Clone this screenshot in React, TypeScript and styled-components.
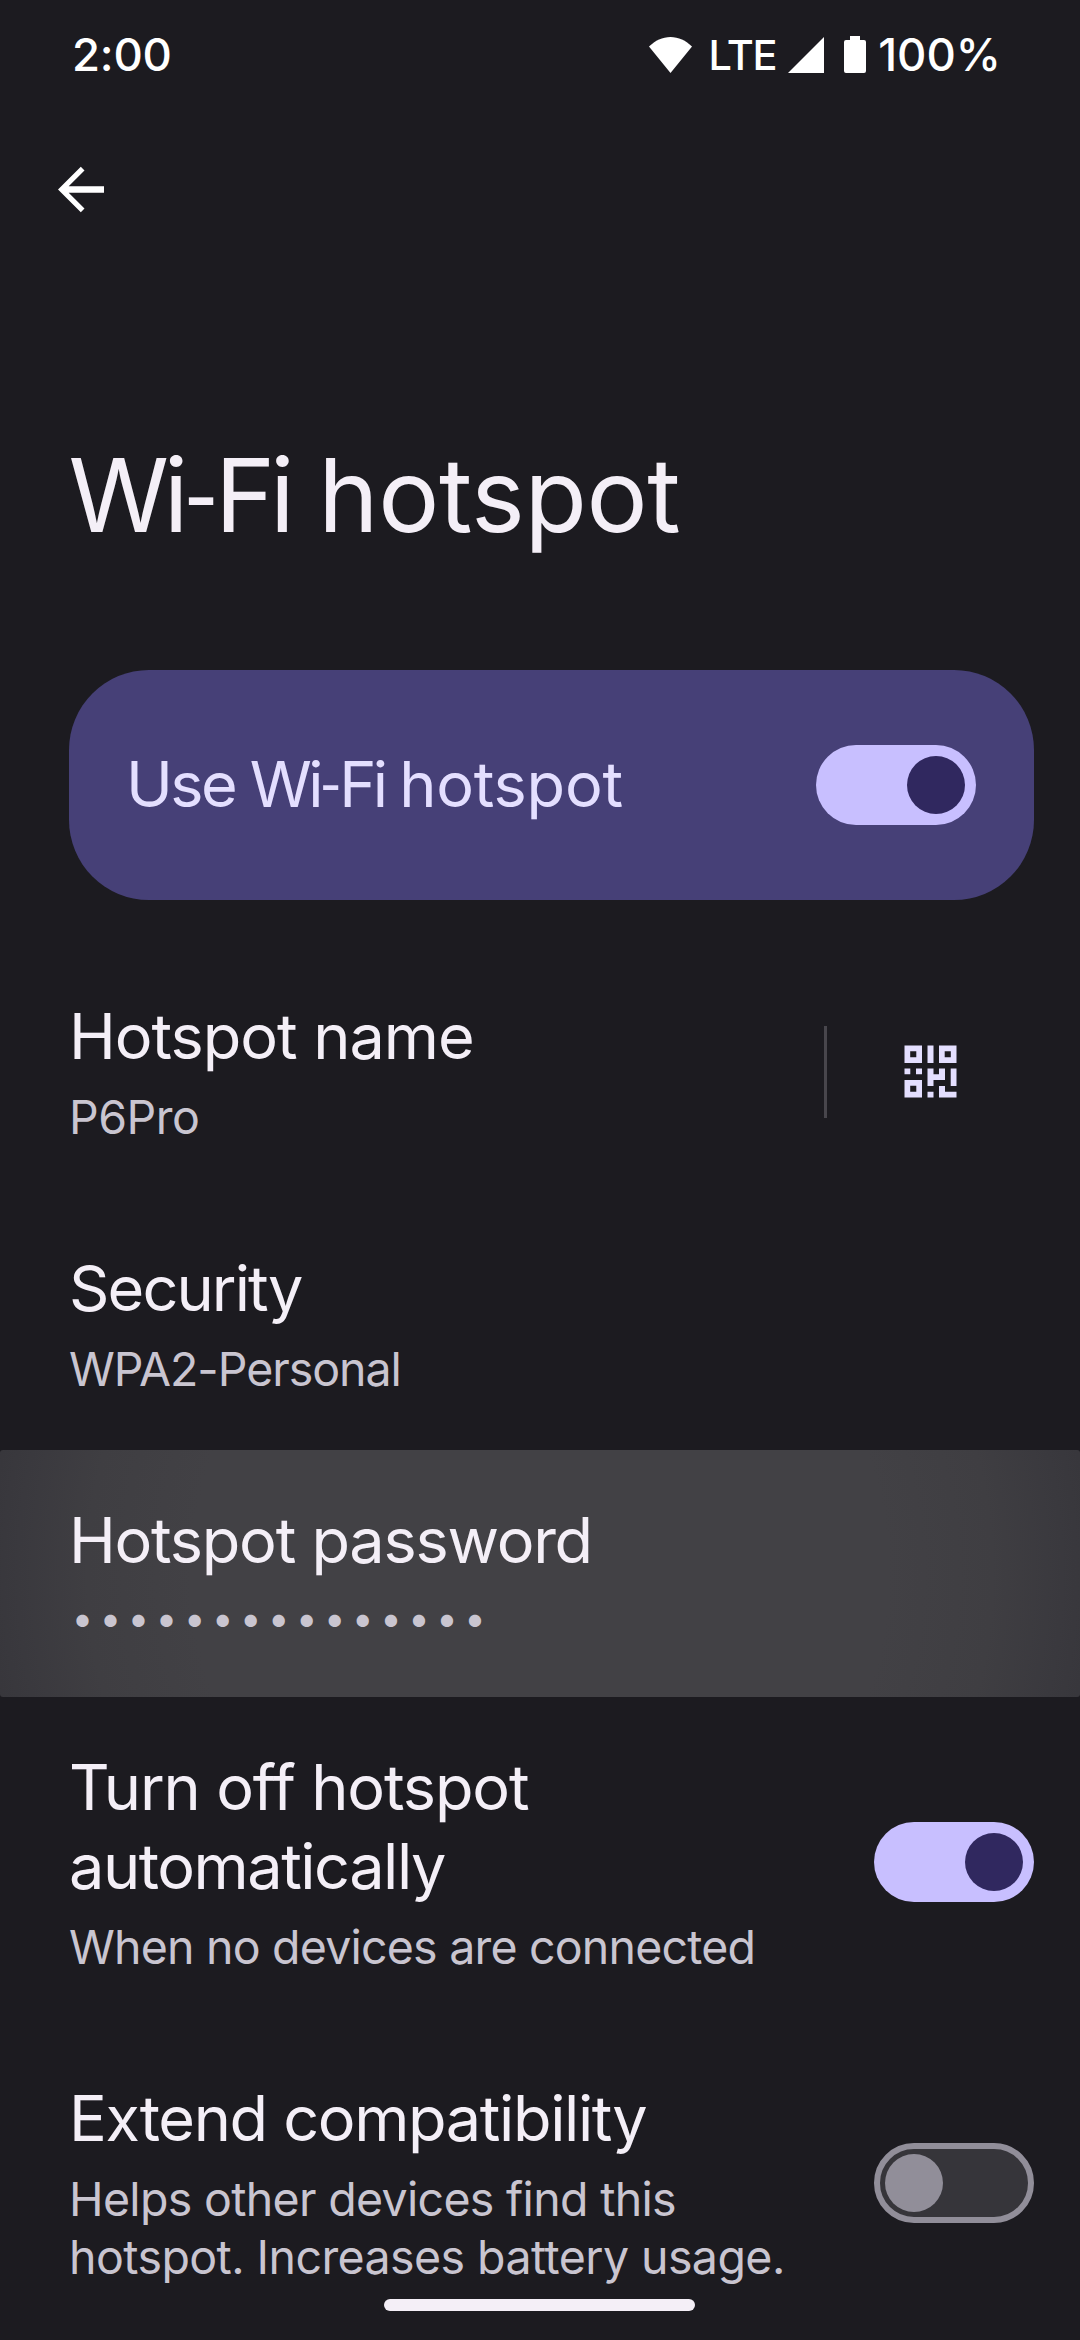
import React from "react";
import styled, { createGlobalStyle } from "styled-components";

const color = {
  background: "#1c1b20",
  text: "#f4eff7",
  subtext: "#c9c5d0",
  card: "#464077",
  cardText: "#e4dfff",
  accent: "#c8bfff",
  onAccent: "#30285f",
  outline: "#918e99",
  track: "#36353a",
  divider: "#48464c",
};

const GlobalStyle = createGlobalStyle`
  body {
    margin: 0;
    background: ${color.background};
    color: ${color.text};
    font-family: Inter, Roboto, sans-serif;
  }
`;

const Screen = styled.div`
  position: relative;
  display: flex;
  flex-direction: column;
  width: 1080px;
  height: 2340px;
  overflow: hidden;
  background: ${color.background};
`;

const StatusBar = styled.header`
  display: flex;
  align-items: center;
  justify-content: space-between;
  flex: none;
  height: 109px;
  padding: 0 79px 0 72px;
  box-sizing: border-box;
  color: #fff;
  font-size: 45.5px;
  line-height: 55px;
  font-weight: 500;
`;

const Clock = styled.span`
  letter-spacing: -0.2px;
`;

const StatusIcons = styled.div`
  display: flex;
  align-items: center;
`;

const Network = styled.span`
  margin: 0 12px 0 16px;
  font-size: 41.5px;
  line-height: 50px;
  letter-spacing: -1.32px;
`;

const BatteryLevel = styled.span`
  margin-left: 12px;
`;

const Glyph = styled.svg<{ $gap?: number }>`
  display: block;
  flex: none;
  margin-left: ${(p) => p.$gap ?? 0}px;
  fill: currentColor;
`;

const Toolbar = styled.nav`
  flex: none;
  height: 324px;
  padding: 57px 0 0 57.5px;
  box-sizing: border-box;
`;

const BackButton = styled.button`
  display: block;
  padding: 0;
  border: 0;
  background: none;
  color: #fff;
`;

const PageTitle = styled.h1`
  flex: none;
  margin: 0 0 113px 68.5px;
  font-size: 102px;
  line-height: 124px;
  font-weight: 400;
  word-spacing: 0;
  white-space: nowrap;
`;

const Word = styled.span<{ $tracking: number }>`
  letter-spacing: ${(p) => p.$tracking}px;
`;

const Hyphen = styled.span`
  margin-left: 0.035em;
  font-family: Roboto, sans-serif;
  line-height: 1;
  letter-spacing: 0;
`;

const MainSwitch = styled.section`
  display: flex;
  align-items: center;
  justify-content: space-between;
  flex: none;
  height: 230px;
  margin: 0 46px 46px 69px;
  padding: 0 58px 0 57px;
  box-sizing: border-box;
  border-radius: 80px;
  background: ${color.card};
  color: ${color.cardText};
`;

const MainLabel = styled.div`
  padding-bottom: 3px;
  font-size: 63px;
  line-height: 76px;
  word-spacing: -3px;
  white-space: nowrap;
`;

const Track = styled.span<{ $on: boolean }>`
  display: flex;
  align-items: center;
  justify-content: ${(p) => (p.$on ? "flex-end" : "flex-start")};
  flex: none;
  width: 160px;
  height: 80px;
  padding: ${(p) => (p.$on ? "0 11px" : "0 5px")};
  box-sizing: border-box;
  border: ${(p) => (p.$on ? "0" : `6px solid ${color.outline}`)};
  border-radius: 40px;
  background: ${(p) => (p.$on ? color.accent : color.track)};
`;

const Knob = styled.span<{ $on: boolean }>`
  width: 58px;
  height: 58px;
  border-radius: 50%;
  background: ${(p) => (p.$on ? color.onAccent : color.outline)};
`;

const Preference = styled.section<{ $pressed?: boolean; $gap?: number }>`
  display: flex;
  align-items: center;
  justify-content: space-between;
  flex: none;
  margin-bottom: ${(p) => p.$gap ?? 5}px;
  padding: 51px 46px 47px 69px;
  border-radius: 3px;
  background: ${(p) =>
    p.$pressed
      ? "radial-gradient(circle 580px at 540px 50%, #424145 0, #424145 60%, #3f3e42 78%, #3a393e 90%, #36353a 100%)"
      : "none"};
`;

const Labels = styled.div`
  display: flex;
  flex-direction: column;
  gap: 12px;
`;

const Name = styled.div`
  font-size: 63px;
  line-height: 79px;
`;

const Summary = styled.div`
  color: ${color.subtext};
  font-size: 46.5px;
  line-height: 58px;
`;

const Line = styled.span<{ $tracking: number }>`
  display: block;
  letter-spacing: ${(p) => p.$tracking}px;
  white-space: nowrap;
`;

const Dots = styled.div`
  height: 58px;
  padding-left: 2.5px;
  color: ${color.subtext};
  font-size: 39px;
  line-height: 52px;
  letter-spacing: 6.1px;
  white-space: nowrap;
`;

const QrAction = styled.div`
  display: flex;
  align-items: center;
  width: 210px;
  height: 92px;
  box-sizing: border-box;
  border-left: 3px solid ${color.divider};
  padding-left: 77px;
  color: ${color.cardText};
`;

const HomeHandle = styled.div`
  position: absolute;
  left: 384px;
  bottom: 29px;
  width: 311px;
  height: 12px;
  border-radius: 6px;
  background: ${color.text};
`;

type TextLine = [text: string, tracking: number];

const Lines = ({ lines }: { lines: TextLine[] }) => (
  <>
    {lines.map(([text, tracking]) => (
      <Line key={text} $tracking={tracking}>
        {text}
      </Line>
    ))}
  </>
);

const WifiWord = ({ tracking }: { tracking: number }) => (
  <Word $tracking={tracking}>
    Wi<Hyphen>-</Hyphen>Fi
  </Word>
);

const Switch = ({ on }: { on: boolean }) => (
  <Track $on={on} role="switch" aria-checked={on}>
    <Knob $on={on} />
  </Track>
);

const QrIcon = () => (
  <Glyph width="53" height="53" viewBox="0 0 53 53">
    <path
      fillRule="evenodd"
      d="M.5.5H18V18H.5zM6.2 6.2V12.3H12.3V6.2zM35 .5H52.5V18H35zM40.7 6.2V12.3H46.8V6.2zM.5 35H18V52.5H.5zM6.2 40.7V46.8H12.3V40.7z"
    />
    <path d="M23.5.5H29.5V18H23.5zM.5 23.5H6.3V29.3H.5zM12 23.5H18V29.3H12zM23.5 23.5H29.5V29.3H35V23.5H41V35H29.5V41H23.5zM46.7 23.5H52.5V41H46.7zM23.5 46.7H29.5V52.5H23.5zM35 41H41V46.7H52.5V52.5H35z" />
  </Glyph>
);

export default function App() {
  return (
    <Screen>
      <GlobalStyle />
      <StatusBar>
        <Clock>2:00</Clock>
        <StatusIcons>
          <Glyph width="43" height="36" viewBox="0 0 43 36">
            <path d="M0 9.600C6.200 3.400 13.500 0 21.500 0S36.800 3.400 43 9.600L21.500 36z" />
          </Glyph>
          <Network>LTE</Network>
          <Glyph width="36" height="36" viewBox="0 0 36 36">
            <path d="M36 0V36H0z" />
          </Glyph>
          <Glyph width="22" height="37" viewBox="0 0 22 37" $gap={20}>
            <path d="M6 0H16V4H20Q22 4 22 6V35Q22 37 20 37H2Q0 37 0 35V6Q0 4 2 4H6z" />
          </Glyph>
          <BatteryLevel>100%</BatteryLevel>
        </StatusIcons>
      </StatusBar>

      <Toolbar>
        <BackButton aria-label="Back">
          <Glyph width="46" height="47" viewBox="0 0 46 47">
            <path d="M46 20.300H10.700L26.500 4.600 22.800 .7 0 23.500 22.800 46.300 26.500 42.400 10.700 26.700H46z" />
          </Glyph>
        </BackButton>
      </Toolbar>

      <PageTitle>
        <WifiWord tracking={-5.2} /> <Word $tracking={-0.4}>hotspot</Word>
      </PageTitle>

      <MainSwitch>
        <MainLabel>
          <Word $tracking={-2.6}>Use</Word> <WifiWord tracking={-3.7} />{" "}
          <Word $tracking={-0.2}>hotspot</Word>
        </MainLabel>
        <Switch on />
      </MainSwitch>

      <Preference>
        <Labels>
          <Name>
            <Lines lines={[["Hotspot name", -1.03]]} />
          </Name>
          <Summary>
            <Lines lines={[["P6Pro", -0.49]]} />
          </Summary>
        </Labels>
        <QrAction>
          <QrIcon />
        </QrAction>
      </Preference>

      <Preference>
        <Labels>
          <Name>
            <Lines lines={[["Security", -1.88]]} />
          </Name>
          <Summary>
            <Lines lines={[["WPA2-Personal", -1.04]]} />
          </Summary>
        </Labels>
      </Preference>

      <Preference $pressed $gap={0}>
        <Labels>
          <Name>
            <Lines lines={[["Hotspot password", -1.26]]} />
          </Name>
          <Dots>•••••••••••••••</Dots>
        </Labels>
      </Preference>

      <Preference>
        <Labels>
          <Name>
            <Lines lines={[["Turn off hotspot", -1.15], ["automatically", -1.47]]} />
          </Name>
          <Summary>
            <Lines lines={[["When no devices are connected", -0.79]]} />
          </Summary>
        </Labels>
        <Switch on />
      </Preference>

      <Preference>
        <Labels>
          <Name>
            <Lines lines={[["Extend compatibility", -1.37]]} />
          </Name>
          <Summary>
            <Lines
              lines={[
                ["Helps other devices find this", -0.68],
                ["hotspot. Increases battery usage.", -0.57],
              ]}
            />
          </Summary>
        </Labels>
        <Switch on={false} />
      </Preference>

      <HomeHandle />
    </Screen>
  );
}
